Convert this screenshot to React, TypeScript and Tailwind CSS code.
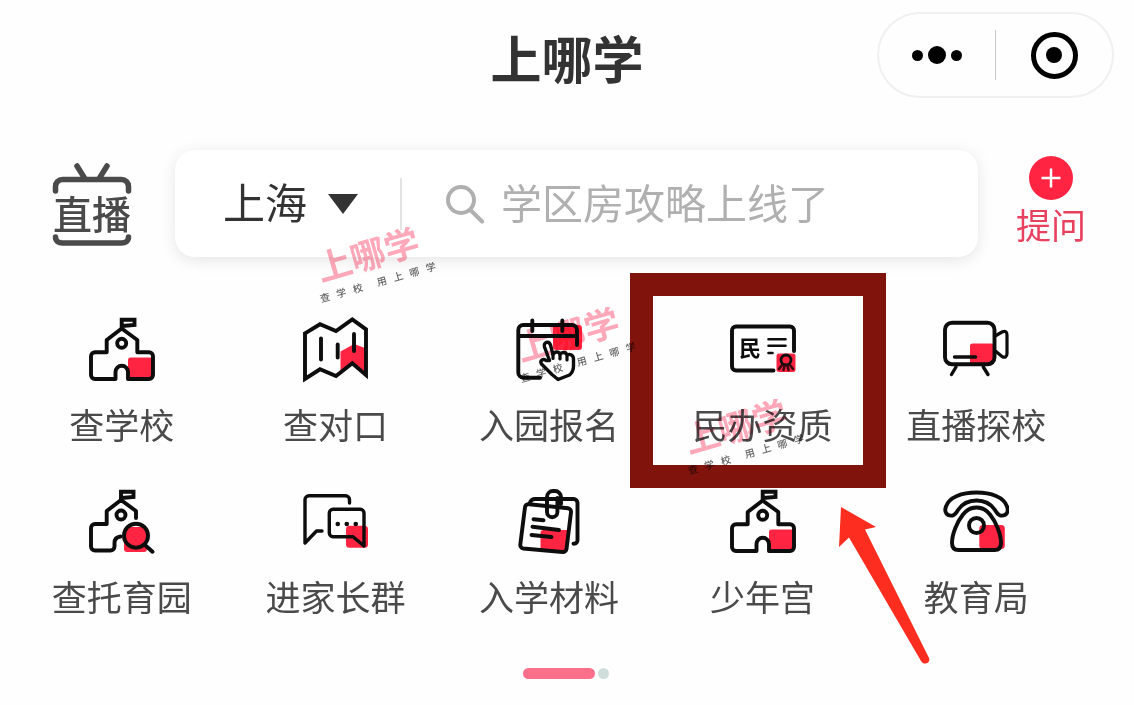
import { useState } from "react";
import type { ReactNode } from "react";

const RED = "#ff2442";

function Icon({ children }: { children: ReactNode }) {
    return (
        <svg
            viewBox="0 0 66 66"
            className="h-[66px] w-[66px]"
            fill="none"
            stroke="#0d0d0d"
            strokeWidth="3.9"
            strokeLinecap="round"
            strokeLinejoin="round"
            aria-hidden="true"
        >
            {children}
        </svg>
    )
}

function SchoolIcon() {
    return (
        <Icon>
            <path d="M39 62.5V43a2.5 2.5 0 0 1 2.5-2.5H64V60l-3 2.5Z" fill={RED} stroke="none" />
            <path d="M26.5 62V55a6.2 6.2 0 0 1 12.5 0v7H60a4 4 0 0 0 4-4V39.3a4 4 0 0 0-4-4H48.3V23L32.7 11.5 17.7 23v12.3H6a4 4 0 0 0-4 4V58a4 4 0 0 0 4 4Z" />
            <path d="M32.7 11V2.7H45.5V8L33 9" strokeLinejoin="miter" />
            <circle cx="32.7" cy="26.3" r="4.5" />
        </Icon>
    )
}

function MapIcon() {
    return (
        <Icon>
            <path d="M38.5 54V34.5L52 27l11 4v24L50.3 46Z" fill={RED} stroke="none" />
            <path d="M3 16.3 18 7.3 34 14 50.3 2.5 64 12.3V58L50.3 46.3 34 59 18 52.3 3 62Z" strokeLinejoin="miter" />
            <path d="M19 21.5v21M35.7 27.5v13M52 17v17" />
        </Icon>
    )
}

function CalendarIcon() {
    return (
        <Icon>
            <rect x="37" y="8" width="29" height="25" rx="3" fill={RED} stroke="none" />
            <path d="M24 60.7H7.3a5 5 0 0 1-5-5V13a5 5 0 0 1 5-5H56a5 5 0 0 1 5 5v15M3 19h57M16.3 3.5v10.5M46.3 3.5v10.5" />
            <path
                d="M33.5 43.5 28.5 30c-1.5-5 4.5-6.5 6-2l2.5 9.5c2-3.5 6-3 7 0 2-3 6-2.5 7 .5 3-1.5 6.5 0 6.5 4v7c0 4-1.5 7-4 9L42 62.5l-6-5-10.5-10.5c-2-3 1.5-6 4.5-3.5Z"
                fill="#fff"
                strokeWidth="3.4"
            />
            <path d="M37 36.5v5M44 37.5v4.5M51 39v4" strokeWidth="3.2" />
        </Icon>
    )
}

function LicenceIcon() {
    return (
        <Icon>
            <rect x="46.5" y="36.5" width="19" height="18.5" rx="2.5" fill={RED} stroke="none" />
            <path d="M43.5 53.5H6a4 4 0 0 1-4-4v-36a4 4 0 0 1 4-4h54a4 4 0 0 1 4 4V34" />
            <path d="M38.5 22.3h17M38.5 28.7h17M38.5 36h4" strokeWidth="2.6" />
            <circle cx="56" cy="43" r="5" strokeWidth="2.8" />
            <path d="m52 48-3 4M60 48l3 4M54.500 49l-1 4M57.500 49l1 4" stroke="#3d0710" strokeWidth="2.6" />
            <text x="9" y="38.5" fontSize="22" fontWeight="700" fill="#0d0d0d" stroke="none">民</text>
        </Icon>
    )
}

function CameraIcon() {
    return (
        <Icon>
            <rect x="27" y="26.5" width="24" height="21" rx="2.5" fill={RED} stroke="none" />
            <rect x="2" y="5.7" width="49.5" height="41.6" rx="7" />
            <path d="M53 18.5 59 15c3-1.5 5-.5 5 3v18.5c0 3.5-2 4.5-5 3L53 34.5" strokeWidth="3.2" />
            <path d="M11.5 40h21M13 50l-4.5 7.5M40.3 50l4.7 7.5" strokeWidth="3.4" />
        </Icon>
    )
}

function NurseryIcon() {
    return (
        <Icon>
            <rect x="35" y="38" width="23" height="25" rx="3" fill={RED} stroke="none" />
            <path d="M47 29V22L32 11 17.7 22v13H6a4 4 0 0 0-4 4v18.5a4 4 0 0 0 4 4h15.5a4 4 0 0 0 4-4V54c0-3.5 2-6 6-6.5" />
            <path d="M32 11V2.7H44.5V8L32.5 9" strokeLinejoin="miter" />
            <circle cx="32" cy="26" r="4.5" />
            <circle cx="47" cy="46.7" r="12" />
            <path d="m56.5 56.5 7 6.3" />
        </Icon>
    )
}

function ChatIcon() {
    return (
        <Icon>
            <rect x="44" y="36.7" width="22" height="22" rx="3.5" fill={RED} stroke="none" />
            <path d="M20 42h-5.5L3 54V10.7a4 4 0 0 1 4-4h36.5a4 4 0 0 1 4 4V14" strokeWidth="3.4" />
            <path d="M62 57V24a3.7 3.7 0 0 0-3.7-3.7H31A3.7 3.7 0 0 0 27.3 24v20a3.7 3.7 0 0 0 3.7 3.7h20Z" strokeWidth="3.4" />
            <path d="M35.7 35h.1M44.7 35h.1M53.7 35h.1" strokeWidth="4.5" />
        </Icon>
    )
}

function MaterialIcon() {
    return (
        <Icon>
            <path d="M24.5 60V44a3 3 0 0 1 3-3H53l-3 22Z" fill={RED} stroke="none" />
            <path d="M14 13.5C15 11 16.5 10 19 10h38.5a4 4 0 0 1 4 4v37c0 2.5-1 3.5-4 3.7" />
            <path d="m13 15.2 39 4a3.5 3.5 0 0 1 3 4L50.5 60a3.5 3.5 0 0 1-3.8 3L7.3 59.5a3.5 3.5 0 0 1-3-3.9L9 18.2a3.5 3.5 0 0 1 4-3Z" />
            <path d="m17.5 30.2 10 1M16.5 37.7 43 41M15.5 46l20 2" />
            <path d="M45 15V8a6 6 0 0 0-6-6h-2a6 6 0 0 0-6 6v15a5.2 5.2 0 0 0 10.4 0V9" />
        </Icon>
    )
}

function PhoneIcon() {
    return (
        <Icon>
            <rect x="36.3" y="36" width="25.5" height="24" rx="3.5" fill={RED} stroke="none" />
            <path d="M9.5 26.5c-6 1-8.5-4-6.5-9C6 8 19 3.5 33.5 3.5S61 8 64 17.5c2 5-.5 10-6.5 9-2.5-.5-4-3-5.5-5.5C48 15 41 11.5 33.5 11.5S19 15 15 21c-1.5 2.5-3 5-5.5 5.5Z" />
            <path d="M33.5 18.5c-5 0-10 2.5-13.5 7C14 33 9 45 9 54c0 4.5 2 7 6.5 7h36c4.5 0 6.500-2.5 6.500-7 0-9-5-21-11-28.5-3.500-4.5-8.500-7-13.500-7Z" />
            <circle cx="33.5" cy="36.5" r="7.5" />
        </Icon>
    )
}

const menus = [
    { label: "查学校", icon: <SchoolIcon /> },
    { label: "查对口", icon: <MapIcon /> },
    { label: "入园报名", icon: <CalendarIcon /> },
    { label: "民办资质", icon: <LicenceIcon />, marked: true },
    { label: "直播探校", icon: <CameraIcon /> },
    { label: "查托育园", icon: <NurseryIcon /> },
    { label: "进家长群", icon: <ChatIcon /> },
    { label: "入学材料", icon: <MaterialIcon /> },
    { label: "少年宫", icon: <SchoolIcon />, pointed: true },
    { label: "教育局", icon: <PhoneIcon /> },
]

function Watermark({ className }: { className: string }) {
    return (
        <div className={`pointer-events-none absolute w-[124px] -rotate-[16deg] mix-blend-multiply ${className}`} aria-hidden="true">
            <div className="pr-1 text-center text-[35px] leading-[38px] font-bold text-[#ffa9ba]">上哪学</div>
            <div className="mt-1 flex justify-center gap-[7px] text-[10px] leading-4 font-medium text-[#666]">
                <span>查</span>
                <span>学</span>
                <span>校</span>
                <span className="ml-2">用</span>
                <span>上</span>
                <span>哪</span>
                <span>学</span>
            </div>
        </div>
    )
}

function Header() {
    return (
        <header className="grid grid-cols-[1fr_auto_1fr] items-center pt-3 pr-5">
            <h1 className="col-start-2 pt-1 pl-5 text-[51px] leading-[60px] font-bold text-[#333]">上哪学</h1>
            <div className="flex h-[86px] w-[237px] items-center justify-self-end rounded-full border-2 border-[#f0f0f0]">
                <button type="button" aria-label="更多" className="flex flex-1 items-center justify-center gap-[5px]">
                    <span className="h-[11px] w-[11px] rounded-full bg-black" />
                    <span className="h-[18px] w-[18px] rounded-full bg-black" />
                    <span className="h-[11px] w-[11px] rounded-full bg-black" />
                </button>
                <span className="h-[50px] w-px bg-[#c8c8c8]" />
                <button type="button" aria-label="关闭" className="flex flex-1 items-center justify-center">
                    <span className="flex h-[47px] w-[47px] items-center justify-center rounded-full border-[5px] border-black">
                        <span className="h-4 w-4 rounded-full bg-black" />
                    </span>
                </button>
            </div>
        </header>
    )
}

function SearchRow() {
    const [keyword, setKeyword] = useState("")
    const [city, setCity] = useState("上海")

    return (
        <div className="mt-[52px] flex items-center pr-12 pl-[52px]">
            <button type="button" className="flex w-20 shrink-0 flex-col items-center text-[#4a4a4a]">
                <svg viewBox="0 0 80 32" className="h-8 w-20" fill="none" stroke="currentColor" strokeWidth="5.5" strokeLinecap="round" aria-hidden="true">
                    <path d="M3.5 29v-4.5a7 7 0 0 1 7-7h59a7 7 0 0 1 7 7V29M25 4l7.5 12M55 4l-7.5 12" />
                </svg>
                <span className="pb-1 text-[39px] leading-9 font-medium">直播</span>
                <svg viewBox="0 0 80 12" className="h-3 w-20" fill="none" stroke="currentColor" strokeWidth="5.5" strokeLinecap="round" aria-hidden="true">
                    <path d="M3.5 3c0 4 3 6 7 6h59c4 0 7-2 7-6" />
                </svg>
            </button>

            <div className="mr-[38px] ml-[43px] flex h-[107px] min-w-0 flex-1 items-center rounded-[20px] bg-white pl-12 shadow-[0_3px_16px_rgba(0,0,0,0.1)]">
                <label htmlFor="city" className="sr-only">城市</label>
                <div className="flex shrink-0 items-center gap-5">
                    <select
                        id="city"
                        value={city}
                        onChange={(e) => setCity(e.target.value)}
                        className="h-[72px] appearance-none bg-transparent pb-1.5 text-[42px] text-[#333] outline-none"
                    >
                        <option>上海</option>
                    </select>
                    <svg viewBox="0 0 30 20" className="h-5 w-[30px]" fill="#333" aria-hidden="true">
                        <path d="M0 0h30L15 20Z" />
                    </svg>
                </div>
                <span className="ml-[42px] h-[52px] w-0.5 shrink-0 bg-[#e3e3e3]" />
                <svg viewBox="0 0 40 40" className="ml-[43px] h-10 w-10 shrink-0" fill="none" stroke="#b0b0b0" strokeWidth="4" strokeLinecap="round" aria-hidden="true">
                    <circle cx="16" cy="16" r="13" />
                    <path d="m25.5 26 11.5 11.5" />
                </svg>
                <input
                    type="text"
                    aria-label="搜索"
                    placeholder="学区房攻略上线了"
                    value={keyword}
                    onChange={(e) => setKeyword(e.target.value)}
                    className="ml-4 min-w-0 flex-1 bg-transparent pb-1.5 text-[41px] leading-[60px] text-[#333] outline-none placeholder:text-[#b0b0b0]"
                />
            </div>

            <button type="button" className="flex shrink-0 flex-col items-center pb-1.5 text-[35px] leading-[44px] text-[#e8405f]">
                <svg viewBox="0 0 44 44" className="h-11 w-11" aria-hidden="true">
                    <circle cx="22" cy="22" r="22" fill={RED} />
                    <path d="M22 12.5v19M12.5 22h19" stroke="#fff" strokeWidth="2.5" />
                </svg>
                <span className="mt-0.5">提问</span>
            </button>
        </div>
    )
}

function App() {
    return (
        <main className="relative min-h-screen overflow-hidden bg-[#fefefe] font-['Noto_Sans_CJK_SC',sans-serif]">
            <Header />
            <SearchRow />

            <nav className="mt-[60px] grid grid-cols-5 gap-y-[43px] pr-[51px] pl-[15px]">
                {menus.map((menu) => (
                    <div key={menu.label} className="relative flex justify-center">
                        <button type="button" className="flex flex-col items-center text-[35px] leading-[44px] text-[#4a4a4a]">
                            {menu.icon}
                            <span className="mt-[19px] whitespace-nowrap">{menu.label}</span>
                        </button>
                        {/* 标注框 */}
                        {menu.marked && (
                            <span className="pointer-events-none absolute -top-11 -right-[17px] -bottom-[42px] -left-[26px] border-[23px] border-[#80130c]" />
                        )}
                        {/* 箭头 */}
                        {menu.pointed && (
                            <svg viewBox="0 0 92 160" className="pointer-events-none absolute top-4 -right-[62px] h-40 w-[92px]" fill="#fd2d20" aria-hidden="true">
                                <path d="M2 2 37 22 26 24.5 90 153c2 5-5 8-8 3L10 32.5 0 42Z" />
                            </svg>
                        )}
                    </div>
                ))}
            </nav>

            <div className="mt-[50px] flex items-center justify-center gap-[3px] pr-[3px]">
                <span className="h-[11px] w-[72px] rounded-full bg-[#fc6f8a]" />
                <span className="h-[11px] w-[11px] rounded-full bg-[#d0dedb]" />
            </div>

            <Watermark className="top-[233px] left-[310px]" />
            <Watermark className="top-[313px] left-[510px]" />
            <Watermark className="top-[405px] left-[678px]" />
        </main>
    )
}

export default App
